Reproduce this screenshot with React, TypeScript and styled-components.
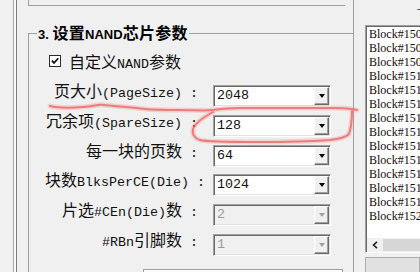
import React from "react";
import styled, { createGlobalStyle } from "styled-components";

const CJK = `"Noto Sans CJK SC", "Liberation Sans", sans-serif`;

const GlobalStyle = createGlobalStyle`
  html, body {
    margin: 0;
    padding: 0;
    background: #f0f0f0;
    overflow: hidden;
  }
  body {
    font-family: ${CJK};
  }
`;

type Row = {
  label: React.ReactNode;
  value: string;
  disabled?: boolean;
  nudge?: boolean;
};

// built lazily so the styled components below exist by then
function nandRows(): Row[] {
  return [
    {
      label: (
        <>
          页大小<Lat $mono>(PageSize) :</Lat>
        </>
      ),
      value: "2048",
    },
    {
      label: (
        <>
          冗余项<Lat $mono>(SpareSize) :</Lat>
        </>
      ),
      value: "128",
    },
    {
      label: (
        <>
          每一块的页数<Lat $mono> :</Lat>
        </>
      ),
      value: "64",
    },
    {
      label: (
        <>
          块数<Lat $mono>BlksPerCE(Die) :</Lat>
        </>
      ),
      value: "1024",
      nudge: true,
    },
    {
      label: (
        <>
          片选<Lat $mono>#CEn(Die)</Lat>数<Lat $mono> :</Lat>
        </>
      ),
      value: "2",
      disabled: true,
    },
    {
      label: (
        <>
          <Lat $mono>#RBn</Lat>引脚数<Lat $mono> :</Lat>
        </>
      ),
      value: "1",
      disabled: true,
    },
  ];
}

const blocks = [
  "Block#1503",
  "Block#1505",
  "Block#1507",
  "Block#1510",
  "Block#1511",
  "Block#1512",
  "Block#1513",
  "Block#1514",
  "Block#1515",
  "Block#1516",
  "Block#1517",
  "Block#1518",
  "Block#1519",
  "Block#1520",
];

const LINE =
  "M50 106 C58 108 70 108 83 107 S97 104 104 105 S128 107 140 108.5 S165 110 180 110 S205 111 213 110 S228 108 240 108 S310 108 330 108 S350 109 357 110";
const LOOP =
  "M213 112 C204 117 195 123 193 129 C192 134 194 138 200 140 S230 142 260 142 S315 141 330 140 C340 139 346 137 349 134 C351 128 352 120 352 111";

export default function App() {
  const rows = nandRows();
  return (
    <>
      <GlobalStyle />
      <Window>
        <Gutter />
        <Splitter />
        <MainPanel>
          <TopBox />
          <GroupBox>
            <Legend>
              <Lat>3. </Lat>设置<Lat>NAND</Lat>芯片参数
            </Legend>
            <CheckRow>
              <CheckBox>
                <svg width="10" height="10" viewBox="0 0 10 10">
                  <path
                    d="M1.8 4.6 L4 6.9 L8.3 2.2"
                    fill="none"
                    stroke="#111"
                    strokeWidth="1.7"
                  />
                </svg>
              </CheckBox>
              <CheckText>
                自定义<Lat $mono>NAND</Lat>参数
              </CheckText>
            </CheckRow>
            <FieldGrid>
              {rows.map((r, i) => (
                <React.Fragment key={i}>
                  <FieldLabel $nudge={r.nudge}>{r.label}</FieldLabel>
                  <Combo $disabled={r.disabled}>
                    <ComboValue $disabled={r.disabled}>{r.value}</ComboValue>
                    <DropButton $disabled={r.disabled} />
                  </Combo>
                </React.Fragment>
              ))}
            </FieldGrid>
            <BottomBox />
          </GroupBox>
        </MainPanel>
        <RightPanel>
          <Caption>T</Caption>
          <ListBox>
            <Items>
              {blocks.map((b, i) => (
                <Item key={i}>{b}</Item>
              ))}
            </Items>
            <HScroll>
              <ScrollArrow>
                <svg width="6" height="8" viewBox="0 0 6 8">
                  <path d="M5 0.8 L1.5 4 L5 7.2" fill="none" stroke="#222" strokeWidth="1.6" />
                </svg>
              </ScrollArrow>
              <Thumb />
            </HScroll>
          </ListBox>
          <ButtonStub />
        </RightPanel>
        <Marks viewBox="0 0 420 272" width="420" height="272">
          <g fill="none" strokeLinecap="round" strokeLinejoin="round">
            <g stroke="#f37a7a" strokeWidth="5" opacity="0.25">
              <path d={LINE} />
              <path d={LOOP} />
            </g>
            <g stroke="#ee5858" strokeWidth="2" opacity="0.7">
              <path d={LINE} />
              <path d={LOOP} />
            </g>
          </g>
        </Marks>
      </Window>
    </>
  );
}

const Window = styled.div`
  position: relative;
  width: 420px;
  height: 272px;
  display: flex;
  overflow: hidden;
  background: #f0f0f0;
  color: #111;
`;

const Gutter = styled.div`
  flex: none;
  width: 13px;
`;

const Splitter = styled.div`
  flex: none;
  width: 2px;
  border-left: 1px solid #a9a9a9;
  border-right: 1px solid #7c7c7c;
  background: #fafafa;
`;

const MainPanel = styled.div`
  flex: none;
  width: 336px;
  box-sizing: border-box;
  padding-left: 11px;
  display: flex;
  flex-direction: column;
  overflow: hidden;
`;

const TopBox = styled.div`
  flex: none;
  width: 316px;
  height: 5px;
  border-left: 1px solid #a0a0a0;
  border-bottom: 1px solid #a0a0a0;
`;

const GroupBox = styled.fieldset`
  flex: none;
  min-width: 0;
  height: 280px;
  margin: 18px 0 0;
  padding: 0 0 0 8px;
  border: 1px solid #a0a0a0;
  border-right: none;
`;

const Legend = styled.legend`
  height: 18px;
  padding: 0 1px;
  font-family: ${CJK};
  font-size: 16px;
  font-weight: 700;
  line-height: 18px;
  letter-spacing: 0.3px;
  color: #000;
  transform: translateY(-1px);
`;

// latin runs inside CJK text: half-width mono or a small bold sans
const Lat = styled.span<{ $mono?: boolean }>`
  font-family: ${(p) => (p.$mono ? `"Liberation Mono", monospace` : `"Liberation Sans", sans-serif`)};
  font-size: ${(p) => (p.$mono ? "13.33px" : "13px")};
  line-height: 0;
  letter-spacing: 0;
`;

const CheckRow = styled.div`
  display: flex;
  align-items: center;
  gap: 8px;
  height: 16px;
  margin: 11px 0 0 12px;
`;

const CheckBox = styled.span`
  flex: none;
  width: 12px;
  height: 12px;
  box-sizing: border-box;
  border: 1px solid #2a2a2a;
  background: #fff;
  display: flex;
  align-items: center;
  justify-content: center;
`;

const CheckText = styled.span`
  font-size: 16px;
  line-height: 16px;
  height: 16px;
  white-space: nowrap;
  color: #111;
`;

const FieldGrid = styled.div`
  display: grid;
  grid-template-columns: 161px 118px;
  grid-auto-rows: 22px;
  column-gap: 15px;
  row-gap: 7.8px;
  margin-top: 16px;
`;

const FieldLabel = styled.div<{ $nudge?: boolean }>`
  align-self: start;
  justify-self: end;
  margin-top: -3px;
  margin-right: ${(p) => (p.$nudge ? "-7px" : "0")};
  height: 16px;
  font-size: 16px;
  line-height: 16px;
  white-space: nowrap;
  color: #111;
`;

const Combo = styled.div<{ $disabled?: boolean }>`
  display: flex;
  box-sizing: border-box;
  height: 22px;
  padding: 1px;
  border: 1px solid;
  border-color: #a0a0a0 #ffffff #ffffff #a0a0a0;
  box-shadow: inset 1px 1px 0 #696969, inset -1px -1px 0 #e3e3e3;
  background: ${(p) => (p.$disabled ? "#f0f0f0" : "#ffffff")};
`;

const ComboValue = styled.span<{ $disabled?: boolean }>`
  flex: 1;
  padding-left: 2px;
  font-family: "Liberation Mono", monospace;
  font-size: 13.33px;
  line-height: 18px;
  color: ${(p) => (p.$disabled ? "#9a9a9a" : "#111")};
`;

const DropButton = styled.span<{ $disabled?: boolean }>`
  flex: none;
  width: 15px;
  box-sizing: border-box;
  display: flex;
  align-items: center;
  justify-content: center;
  background: #f0f0f0;
  border: 1px solid;
  border-color: #ffffff #696969 #696969 #ffffff;
  box-shadow: inset -1px -1px 0 #a0a0a0;

  &::after {
    content: "";
    border-left: 3.5px solid transparent;
    border-right: 3.5px solid transparent;
    border-top: 4px solid ${(p) => (p.$disabled ? "#a0a0a0" : "#000")};
  }
`;

const BottomBox = styled.div`
  width: 198px;
  height: 20px;
  margin: 13px 0 0 106px;
  border: 1px solid #a0a0a0;
  background: #fbfbfb;
`;

const RightPanel = styled.div`
  flex: 1;
  min-width: 0;
  padding-left: 11px;
  border-left: 1px solid #a0a0a0;
  display: flex;
  flex-direction: column;
  overflow: hidden;
`;

const Caption = styled.div`
  height: 16px;
  margin: 6px 0 0 52px;
  font-family: "Liberation Sans", sans-serif;
  font-size: 13px;
  line-height: 16px;
  color: #4a4ac8;
`;

const ListBox = styled.div`
  flex: none;
  width: 90px;
  height: 228px;
  margin-top: 3px;
  box-sizing: border-box;
  border: 1px solid;
  border-color: #a0a0a0 #ffffff #ffffff #a0a0a0;
  box-shadow: inset 1px 1px 0 #696969;
  background: #fff;
  display: flex;
  flex-direction: column;
  padding: 1px 0 0 1px;
`;

const Items = styled.div`
  flex: 1;
  overflow: hidden;
`;

const Item = styled.div`
  padding-left: 2px;
  font-family: "Liberation Serif", serif;
  font-size: 12px;
  line-height: 14px;
  white-space: nowrap;
  color: #140a0a;
`;

const HScroll = styled.div`
  flex: none;
  height: 14px;
  display: flex;
  background: #f0f0f0;
`;

const ScrollArrow = styled.div`
  flex: none;
  width: 16px;
  display: flex;
  align-items: center;
  justify-content: center;
`;

const Thumb = styled.div`
  flex: 1;
  margin: 1px 0;
  background: #d6d6d6;
`;

const ButtonStub = styled.div`
  flex: none;
  height: 22px;
  margin-top: 4px;
  border: 1px solid #adadad;
  background: #e1e1e1;
`;

const Marks = styled.svg`
  position: absolute;
  left: 0;
  top: 0;
  pointer-events: none;
`;
